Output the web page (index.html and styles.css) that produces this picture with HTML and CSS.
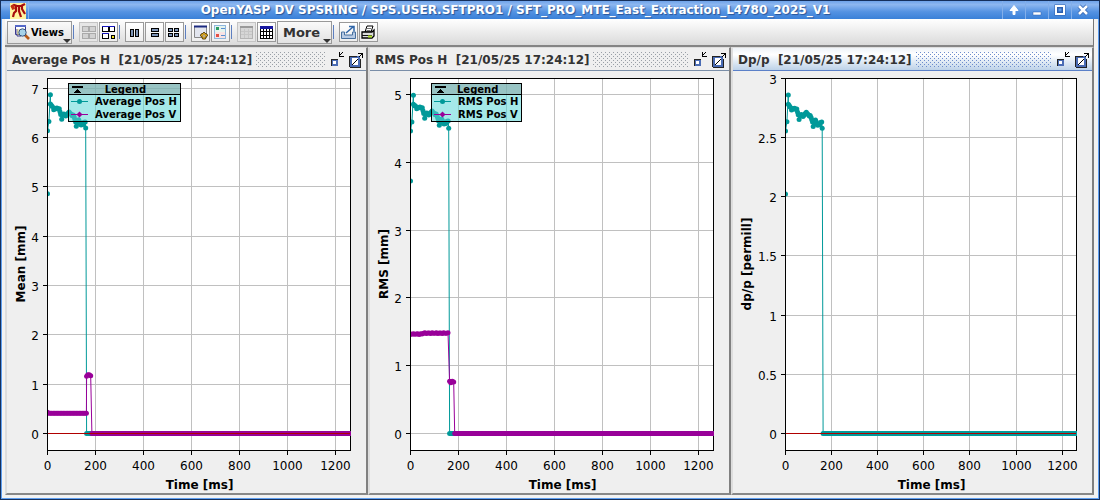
FILE: index.html
```html
<!DOCTYPE html>
<html lang="en">
<head>
<meta charset="utf-8">
<title>OpenYASP DV SPSRING</title>
<link rel="stylesheet" href="styles.css">
</head>
<body>
<div class="window">
  <header class="titlebar">
    <button class="app-icon" aria-label="Window menu">
      <svg width="16" height="16" viewBox="0 0 16 16"><rect width="16" height="16" fill="#fff3a0"/><path d="M1 4l3-2 3 1 4 0 4-2M6 3v5l-2 2-1 4M9 3l0 5 2 6M12 3v3l3 5" fill="none" stroke="#a80c0c" stroke-width="2.2"/><path d="M1 3l3-2 1 5-3 1z" fill="#c43010"/></svg>
    </button>
    <h1 class="window-title">OpenYASP DV SPSRING / SPS.USER.SFTPRO1 / SFT_PRO_MTE_East_Extraction_L4780_2025_V1</h1>
    <div class="window-buttons">
      <button class="window-button" aria-label="Shade"><svg width="14" height="14" viewBox="0 0 14 14"><path d="M7 2.5L3 7.5h3v4h2v-4h3z" fill="#fff" stroke="#fff"/></svg></button>
      <button class="window-button" aria-label="Minimize"><svg width="14" height="14" viewBox="0 0 14 14"><path d="M3 9h8v3H3z" fill="#fff" stroke="#2c5fae" stroke-width=".5"/></svg></button>
      <button class="window-button" aria-label="Maximize"><svg width="14" height="14" viewBox="0 0 14 14"><path d="M3.5 3.5h7v7h-7z" fill="none" stroke="#2c5fae" stroke-width="4"/><path d="M3 3h8v8H3z" fill="none" stroke="#fff" stroke-width="2"/></svg></button>
      <button class="window-button" aria-label="Close"><svg width="14" height="14" viewBox="0 0 14 14"><path d="M3 3l8 8M11 3l-8 8" stroke="#2c5fae" stroke-width="4"/><path d="M3 3l8 8M11 3l-8 8" stroke="#fff" stroke-width="2.6"/></svg></button>
    </div>
  </header>

  <main class="content">
    <nav class="toolbar" aria-label="Tools">
      <button class="menu-button views"><svg width="16" height="16" viewBox="0 0 16 16"><path d="M1.500 1.500h10v9h-10z" fill="#fff" stroke="#3a3a90"/><path d="M1 2h11" stroke="#5468c8" stroke-width="2"/><path d="M3 5v7h4" fill="none" stroke="#3a3a90"/><path d="M4 5v6" stroke="#e6d86c"/><path d="M11 11l4 4" stroke="#b85a18" stroke-width="2.6"/><circle cx="8.500" cy="8.500" r="3.700" fill="#a7d3ea" stroke="#35507c"/></svg>Views</button>
      <span class="separator"></span>
      <button class="tool" disabled aria-label="Tile"><svg width="16" height="16" viewBox="0 0 16 16" shape-rendering="crispEdges"><path d="M2.500 2.500h6v5h-6zM9.500 2.500h6v5h-6zM2.500 9.500h6v5h-6zM9.500 9.500h6v5h-6z" fill="#d2d2d2" stroke="#aaa"/></svg></button>
      <button class="tool" aria-label="Tile and lock"><svg width="16" height="16" viewBox="0 0 16 16" shape-rendering="crispEdges"><path d="M2.500 2.500h6v5h-6zM9.500 2.500h5v5h-5zM2.500 9.500h6v5h-6z" fill="#fff" stroke="#000"/><path d="M2 2.500h13M2 9.500h7" stroke="#1616c0"/><path d="M11.500 11.500h3v3h-3z" fill="#f6e620" stroke="#000"/></svg></button>
      <span class="separator"></span>
      <button class="tool" aria-label="Columns"><svg width="16" height="16" viewBox="0 0 16 16" shape-rendering="crispEdges"><path d="M4.500 5.500h3v7h-3zM9.500 5.500h3v7h-3z" fill="#7d95b8" stroke="#000"/></svg></button>
      <button class="tool" aria-label="Rows"><svg width="16" height="16" viewBox="0 0 16 16" shape-rendering="crispEdges"><path d="M5.500 4.500h7v3h-7zM5.500 9.500h7v3h-7z" fill="#7d95b8" stroke="#000"/></svg></button>
      <button class="tool" aria-label="Grid"><svg width="16" height="16" viewBox="0 0 16 16" shape-rendering="crispEdges"><path d="M2.500 4.500h4v3h-4zM8.500 4.500h4v3h-4zM2.500 9.500h4v3h-4zM8.500 9.500h4v3h-4z" fill="#7d95b8" stroke="#000"/></svg></button>
      <span class="separator"></span>
      <button class="tool" aria-label="View settings"><svg width="16" height="16" viewBox="0 0 16 16"><path d="M2.500 2.500h12v11h-12z" fill="#e2e5ee" stroke="#888"/><path d="M2 2.500h13" stroke="#1c2a80" stroke-width="2"/><path d="M12 8l1 1.500 2 .5.500 2-1.500 1-.5 2h-3l-.5-2-1.500-1 .5-2 2-.5z" fill="#f0b51c" stroke="#58400a"/><circle cx="12" cy="12" r="1.200" fill="#fff" stroke="#58400a" stroke-width=".6"/></svg></button>
      <button class="tool" aria-label="Legend"><svg width="16" height="16" viewBox="0 0 16 16" shape-rendering="crispEdges"><path d="M2 1h12v7H2z" fill="#e5f4ee"/><path d="M2 8h12v7H2z" fill="#f9e3e3"/><path d="M2.500 1.500h11v13h-11z" fill="none" stroke="#8fb8de"/><path d="M4 3h3v3H4z" fill="#2c9c62"/><path d="M4 10h3v3H4z" fill="#e24f45"/><path d="M9 4.500h4M9 11.500h4" stroke="#5a8ed0"/></svg></button>
      <span class="separator"></span>
      <button class="tool" disabled aria-label="Table"><svg width="16" height="16" viewBox="0 0 16 16" shape-rendering="crispEdges"><path d="M2.500 2.500h12v12h-12z" fill="#d6d6d6" stroke="#b4b4b4"/><path d="M2 3h13" stroke="#999" stroke-width="2"/><path d="M3 7.500h11M3 10.500h11M6.500 5v9M10.500 5v9" stroke="#c6c6c6"/></svg></button>
      <button class="tool" aria-label="Data table"><svg width="16" height="16" viewBox="0 0 16 16" shape-rendering="crispEdges"><path d="M2.500 2.500h12v12h-12z" fill="#fff" stroke="#000"/><path d="M3 7.500h11M3 11.500h11M5.500 5v9M8.500 5v9M11.500 5v9" stroke="#000"/><path d="M2 3.500h13" stroke="#1818a0" stroke-width="3"/></svg></button>
      <button class="menu-button more">More</button>
      <span class="separator"></span>
      <button class="tool" aria-label="Export"><svg width="16" height="16" viewBox="0 0 16 16"><path d="M1.500 8v6.500h14V8h-3v3h-8V8z" fill="#b8cbe4" stroke="#47709f"/><path d="M6 9l7-6M9 2.500h5v5" fill="none" stroke="#2f65a8" stroke-width="1.500"/></svg></button>
      <button class="tool" aria-label="Print"><svg width="16" height="16" viewBox="0 0 16 16"><path d="M5 8l2-6h6l-2 6z" fill="#fff" stroke="#000"/><path d="M7 4.500h4M6.500 6.500h4" stroke="#777"/><path d="M2 8h10l2-2v6l-2 2H2z" fill="#ddd" stroke="#000" stroke-width="1.300"/><path d="M2 11.500h10" stroke="#111"/><path d="M8 12.500h4" stroke="#b7e82c" stroke-width="2"/></svg></button>
    </nav>

    <div class="panels">
      <section class="panel">
        <header class="panel-header">
          <h2 class="panel-title">Average Pos H&nbsp; [21/05/25 17:24:12]</h2><span class="grip"></span>
          <button class="frame-button" aria-label="Iconify"><svg width="14" height="18" viewBox="0 0 14 18" shape-rendering="crispEdges"><path d="M2 9h5v5H2z" fill="#fff" stroke="#4a6cb4" stroke-width="2"/><path d="M1.500 15V8.500H8" fill="none" stroke="#222"/><path d="M13 1L9 5M9.500 1v4.500H14" fill="none" stroke="#000"/></svg></button>
          <button class="frame-button" aria-label="Maximize panel"><svg width="14" height="18" viewBox="0 0 14 18" shape-rendering="crispEdges"><path d="M2 6h8v9H2z" fill="#fff" stroke="#4a6cb4" stroke-width="2"/><path d="M.5 16V5.500H8M11.500 8v8.500H1" fill="none" stroke="#222"/><path d="M3 14l6-6M10 6l3-3M9 2.500h4.500V7" fill="none" stroke="#000"/></svg></button>
        </header>
        <div class="chart" data-chart="mean">
          <div class="legend">
            <div class="legend-title"><svg width="11" height="9" viewBox="0 0 11 9" shape-rendering="crispEdges"><path d="M.5 1.500h10v1H.5z" fill="none" stroke="#000"/><path d="M5.500 4L9 8H2z"/></svg><span>Legend</span></div>
            <div class="legend-row"><svg width="17" height="9" viewBox="0 0 17 9"><path d="M0 4.500h17" stroke="#009999"/><circle cx="8.500" cy="4.500" r="2.500" fill="#009999"/></svg><span>Average Pos H</span></div>
            <div class="legend-row"><svg width="17" height="9" viewBox="0 0 17 9"><path d="M0 4.500h17" stroke="#990099"/><path d="M8.500 1.500l3 3-3 3-3-3z" fill="#990099"/></svg><span>Average Pos V</span></div>
          </div>
        </div>
      </section>

      <section class="panel">
        <header class="panel-header">
          <h2 class="panel-title">RMS Pos H&nbsp; [21/05/25 17:24:12]</h2><span class="grip"></span>
          <button class="frame-button" aria-label="Iconify"><svg width="14" height="18" viewBox="0 0 14 18" shape-rendering="crispEdges"><path d="M2 9h5v5H2z" fill="#fff" stroke="#4a6cb4" stroke-width="2"/><path d="M1.500 15V8.500H8" fill="none" stroke="#222"/><path d="M13 1L9 5M9.500 1v4.500H14" fill="none" stroke="#000"/></svg></button>
          <button class="frame-button" aria-label="Maximize panel"><svg width="14" height="18" viewBox="0 0 14 18" shape-rendering="crispEdges"><path d="M2 6h8v9H2z" fill="#fff" stroke="#4a6cb4" stroke-width="2"/><path d="M.5 16V5.500H8M11.500 8v8.500H1" fill="none" stroke="#222"/><path d="M3 14l6-6M10 6l3-3M9 2.500h4.500V7" fill="none" stroke="#000"/></svg></button>
        </header>
        <div class="chart" data-chart="rms">
          <div class="legend">
            <div class="legend-title"><svg width="11" height="9" viewBox="0 0 11 9" shape-rendering="crispEdges"><path d="M.5 1.500h10v1H.5z" fill="none" stroke="#000"/><path d="M5.500 4L9 8H2z"/></svg><span>Legend</span></div>
            <div class="legend-row"><svg width="17" height="9" viewBox="0 0 17 9"><path d="M0 4.500h17" stroke="#009999"/><circle cx="8.500" cy="4.500" r="2.500" fill="#009999"/></svg><span>RMS Pos H</span></div>
            <div class="legend-row"><svg width="17" height="9" viewBox="0 0 17 9"><path d="M0 4.500h17" stroke="#990099"/><path d="M8.500 1.500l3 3-3 3-3-3z" fill="#990099"/></svg><span>RMS Pos V</span></div>
          </div>
        </div>
      </section>

      <section class="panel active">
        <header class="panel-header">
          <h2 class="panel-title">Dp/p&nbsp; [21/05/25 17:24:12]</h2><span class="grip"></span>
          <button class="frame-button" aria-label="Iconify"><svg width="14" height="18" viewBox="0 0 14 18" shape-rendering="crispEdges"><path d="M2 9h5v5H2z" fill="#fff" stroke="#4a6cb4" stroke-width="2"/><path d="M1.500 15V8.500H8" fill="none" stroke="#222"/><path d="M13 1L9 5M9.500 1v4.500H14" fill="none" stroke="#000"/></svg></button>
          <button class="frame-button" aria-label="Maximize panel"><svg width="14" height="18" viewBox="0 0 14 18" shape-rendering="crispEdges"><path d="M2 6h8v9H2z" fill="#fff" stroke="#4a6cb4" stroke-width="2"/><path d="M.5 16V5.500H8M11.500 8v8.500H1" fill="none" stroke="#222"/><path d="M3 14l6-6M10 6l3-3M9 2.500h4.500V7" fill="none" stroke="#000"/></svg></button>
        </header>
        <div class="chart" data-chart="dpp"></div>
      </section>
    </div>
  </main>
</div>
<script src="charts.js"></script>
</body>
</html>
```

FILE: styles.css
```css
* { box-sizing: border-box; }

body {
  margin: 0;
  font-family: "DejaVu Sans", sans-serif;
  font-size: 12px;
  color: #000;
}

button {
  margin: 0;
  padding: 0;
  border: 0;
  background: none;
  font: inherit;
  color: inherit;
}

svg { display: block; flex: none; }

.window {
  height: 100vh;
  min-height: 300px;
  display: flex;
  flex-direction: column;
  border: 1px solid #16305c;
  background: #f2f2f2;
}

.titlebar {
  display: flex;
  align-items: stretch;
  height: 18px;
  flex: none;
  background: linear-gradient(#6fa3ea, #8db7f0 20%, #5492e2 60%, #3a80d8);
}

.app-icon {
  padding: 1px 2px 0 3px;
  margin-left: 6px;
  border-right: 1px solid #8ab4ee;
}

.window-title {
  flex: 1;
  min-width: 0;
  margin: 0;
  overflow: hidden;
  white-space: nowrap;
  text-align: center;
  font-size: 12px;
  line-height: 18px;
  color: #fff;
  text-shadow: 1px 1px 1px #2a5597;
}

.window-buttons { display: flex; margin-right: 5px; }

.window-button {
  display: flex;
  align-items: center;
  justify-content: center;
  width: 23px;
  border-left: 1px solid #83afea;
}

.content {
  flex: 1;
  min-height: 0;
  display: flex;
  flex-direction: column;
  padding: 0 4px 3px 3px;
  border: solid #5f9ff0;
  border-width: 0 1px 1px;
}

.toolbar {
  display: flex;
  align-items: center;
  gap: 1px;
  height: 28px;
  flex: none;
  padding: 0 2px;
  border-right: 1px solid #777;
  border-bottom: 2px solid #858585;
  background: linear-gradient(#fff, #dadada);
}

.tool {
  display: flex;
  align-items: center;
  width: 19px;
  height: 20px;
  border: 1px solid #999;
  background: linear-gradient(#fff, #eee);
}

.tool:disabled { border-color: #c4c4c4; background: #e6e6e6; }

.separator {
  width: 1px;
  height: 14px;
  margin-right: 4px;
  background: #5d7fc0;
}

.menu-button {
  position: relative;
  display: flex;
  align-items: center;
  height: 23px;
  border: 1px solid #999;
  background: linear-gradient(#fafafa, #e2e2e2);
  font-weight: bold;
}

.menu-button::after {
  content: "";
  position: absolute;
  right: 0;
  bottom: 0;
  border: solid transparent;
  border-width: 4px 4px 0;
  border-top-color: #333;
}

.views { width: 65px; gap: 1px; padding-left: 6px; font-size: 10px; }
.more { width: 55px; padding-left: 5px; font-size: 13px; color: #333; }

.panels {
  flex: 1;
  min-height: 0;
  display: grid;
  grid-template-columns: repeat(3, minmax(0, 1fr));
}

.panel {
  display: flex;
  flex-direction: column;
  min-width: 0;
  min-height: 0;
  border: 2px solid #ddd;
  border-top-width: 1px;
  border-right-color: #808080;
  border-bottom-color: #888;
  background: #efefef;
}

.panel-header {
  display: flex;
  align-items: center;
  height: 23px;
  flex: none;
  padding: 1px 3px 0 5px;
  border-bottom: 1px solid #7a8ea8;
  --dot: #999fa6;
}

.active .panel-header {
  border-bottom-color: #5b80c8;
  background: linear-gradient(#eef3f8, #fff 30%, #bdd2e8);
  --dot: #6c8ccc;
}

.panel-title {
  margin: 0;
  white-space: nowrap;
  font-size: 12px;
  color: #333;
}

.grip {
  flex: 1;
  height: 15px;
  margin-left: 4px;
  background-image:
    conic-gradient(from 270deg at 1px 1px, var(--dot) 90deg, transparent 0),
    conic-gradient(from 270deg at 1px 1px, var(--dot) 90deg, transparent 0);
  background-size: 4px 4px;
  background-position: 0 0, 2px 2px;
}

.frame-button { margin-left: 5px; }

.chart {
  position: relative;
  flex: 1;
  min-height: 0;
}

.plot { width: 100%; height: 100%; }
.plot text { font-size: 12px; }
.plot .axis-title { font-weight: bold; }

.plot-area { fill: #fff; }
.gridline { stroke: #c0c0c0; }
.frame { fill: none; stroke: #000; }
.zero { stroke: #b00000; }
.series { fill: none; stroke-width: 1; }
.teal { stroke: #009999; }
.purple { stroke: #990099; }
.dots-teal { fill: #009999; }
.dots-purple { fill: #990099; }

.legend {
  position: absolute;
  top: 12px;
  left: 61px;
  border: 1px solid #000;
  background: rgba(89, 214, 214, .54);
  font-size: 10px;
  font-weight: bold;
  line-height: 13px;
}

.legend-title {
  display: flex;
  align-items: center;
  height: 11px;
  padding-left: 3px;
  border-bottom: 1px solid #000;
  background: rgba(140, 160, 160, .5);
}

.legend-title span { flex: 1; text-align: center; padding-right: 12px; }

.legend-row {
  display: flex;
  align-items: center;
  gap: 7px;
  padding: 0 3px 0 2px;
  white-space: nowrap;
}
```

FILE: charts.js
```js
const NS = "http://www.w3.org/2000/svg";

// [time in ms, fraction of the peak value]
const profile = [
  [0, .708], [0, .894], [6, .921], [12, 1], [12, .973], [16, .969], [20, .965],
  [26, .956], [30, .960], [35, .959], [39, .961], [44, .958], [49, .959],
  [52, .950], [55, .942], [59, .928], [63, .940], [68, .943], [72, .939],
  [76, .937], [79, .940], [84, .945], [90, .949], [95, .945], [99, .942],
  [103, .938], [107, .940], [111, .934], [114, .927], [117, .920], [120, .907],
  [124, .918], [130, .926], [133, .921], [136, .914], [140, .911], [143, .914],
  [148, .912], [152, .919], [157, .920], [159, .902]
];
const rmsProfile = profile.map(([t, v], i) => {
  if (i === 0) return [t, .746];
  if (i > 5 && i < 40) return [t, v + .004];
  return [t, v];
});

const scaled = (points, peak) => points.map(([t, v]) => [t, v * peak]);
const run = (from, to, f) => {
  const out = [];
  for (let t = from; t <= to; t += 6) out.push([t, f(t)]);
  return out;
};

const charts = {
  mean: {
    left: 40, max: 7.2, min: -.345, ticks: [0, 1, 2, 3, 4, 5, 6, 7], zero: true,
    label: "Mean [mm]", labelX: 18,
    series: [
      ["teal", [...scaled(profile, 6.87), ...run(163, 1262, () => 0)]],
      ["purple", [[0, .43], ...run(6, 162, () => .41), [163, 1.16], [168, 1.19], [174, 1.19], [180, 1.17], ...run(185, 1262, () => 0)]]
    ]
  },
  rms: {
    left: 40, max: 5.236, min: -.25, ticks: [0, 1, 2, 3, 4, 5], zero: false,
    label: "RMS [mm]", labelX: 18,
    series: [
      ["teal", [...scaled(rmsProfile, 4.99), ...run(163, 1262, () => 0)]],
      ["purple", [...run(0, 160, t => 1.473 + .005 * Math.sin(t * 1.7) + (t > 50 ? .008 : -.006)), [163, .77], [168, .75], [174, .77], [180, .76], ...run(184, 1262, () => 0)]]
    ]
  },
  dpp: {
    left: 52, max: 3, min: -.1437, ticks: [0, .5, 1, 1.5, 2, 2.5, 3], zero: true,
    label: "dp/p [permill]", labelX: 18,
    series: [["teal", [...scaled(profile, 2.86), ...run(163, 1262, () => 0)]]]
  }
};

function add(parent, name, attributes, text) {
  const node = document.createElementNS(NS, name);
  for (const key in attributes) node.setAttribute(key, attributes[key]);
  if (text !== undefined) node.textContent = text;
  parent.appendChild(node);
  return node;
}

function draw(box) {
  const c = charts[box.dataset.chart];
  const old = box.querySelector(".plot");
  if (old) old.remove();
  const width = box.clientWidth, height = box.clientHeight;
  const left = c.left, right = width - 16, top = 7, bottom = height - 43;
  const x = t => left + t / 1262 * (right - left);
  const y = v => top + (c.max - v) / (c.max - c.min) * (bottom - top);
  const crisp = v => Math.round(v) + .5;

  const svg = document.createElementNS(NS, "svg");
  svg.setAttribute("class", "plot");
  box.prepend(svg);
  add(svg, "rect", { class: "plot-area", x: left, y: top, width: right - left, height: bottom - top });

  const clipId = "clip-" + box.dataset.chart;
  const clip = add(svg, "clipPath", { id: clipId });
  add(clip, "rect", { x: left, y: top, width: right - left + 1, height: bottom - top });

  for (const v of c.ticks) {
    const py = crisp(y(v));
    add(svg, "path", { class: "gridline", d: `M${left} ${py}H${right}` });
    add(svg, "path", { class: "frame", d: `M${left - 4} ${py}H${left}` });
    add(svg, "text", { x: left - 8, y: py + 5, "text-anchor": "end" }, v);
  }
  for (let t = 0; t <= 1200; t += 200) {
    const px = crisp(x(t));
    add(svg, "path", { class: "gridline", d: `M${px} ${top}V${bottom}` });
    add(svg, "path", { class: "frame", d: `M${px} ${bottom}V${bottom + 5}` });
    add(svg, "text", { x: px, y: bottom + 20, "text-anchor": "middle" }, t);
  }
  add(svg, "rect", { class: "frame", x: left + .5, y: top + .5, width: right - left, height: bottom - top });

  const layer = add(svg, "g", { "clip-path": `url(#${clipId})` });
  for (const [color, points] of c.series) {
    const place = points.map(([t, v]) => [(x(t) + .5).toFixed(1), (y(v) + .5).toFixed(1)]);
    add(layer, "path", { class: "series " + color, d: "M" + place.map(p => p.join(" ")).join("L") });
    for (const [cx, cy] of place) add(layer, "circle", { class: "dots-" + color, cx, cy, r: 2.5 });
  }
  if (c.zero) add(layer, "path", { class: "zero", d: `M${left} ${crisp(y(0))}H${right}` });
  add(svg, "path", { class: "frame", d: `M${left + .5} ${top}V${bottom}` });

  add(svg, "text", { class: "axis-title", x: (left + right) / 2 + 1, y: bottom + 39, "text-anchor": "middle" }, "Time [ms]");
  add(svg, "text", {
    class: "axis-title", "text-anchor": "middle",
    transform: `translate(${c.labelX} ${(top + bottom) / 2}) rotate(-90)`
  }, c.label);
}

const drawAll = () => document.querySelectorAll(".chart").forEach(draw);
drawAll();
window.addEventListener("resize", drawAll);
```
